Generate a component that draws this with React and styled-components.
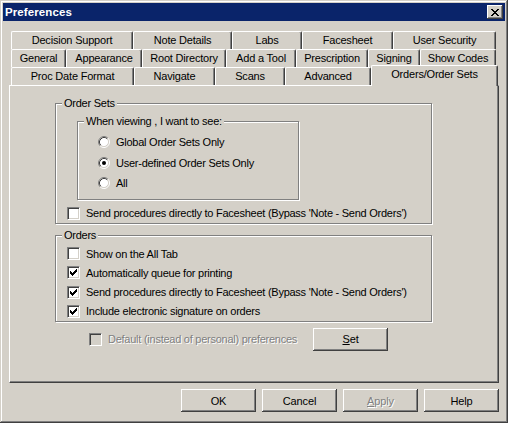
import React from "react";
import styled, { createGlobalStyle } from "styled-components";

const Global = createGlobalStyle`
  html, body { margin: 0; padding: 0; background: #d4d0c8; }
  body { font-family: "Liberation Sans", Arial, sans-serif; font-size: 11px; color: #000; letter-spacing: -0.25px; }
  * { box-sizing: border-box; }
`;

const Window = styled.div`
  width: 508px;
  height: 423px;
  background: #d4d0c8;
  padding: 3px;
  display: flex;
  flex-direction: column;
  box-shadow: inset -1px -1px 0 #404040, inset 1px 1px 0 #d4d0c8,
    inset -2px -2px 0 #808080, inset 2px 2px 0 #fff;
`;

const TitleBar = styled.div`
  height: 18px;
  background: #0a246a;
  display: flex;
  align-items: center;
  justify-content: space-between;
  padding: 0 2px 0 2px;
`;

const Title = styled.span`
  color: #fff;
  font-weight: bold;
  font-size: 11.5px;
  letter-spacing: 0.1px;
`;

const CloseBtn = styled.div`
  width: 16px;
  height: 14px;
  background: #d4d0c8;
  display: flex;
  align-items: center;
  justify-content: center;
  box-shadow: inset -1px -1px 0 #404040, inset 1px 1px 0 #fff,
    inset -2px -2px 0 #808080;
  padding-right: 1px;
`;

const Body = styled.div`
  flex: 1;
  display: flex;
  flex-direction: column;
  padding: 10px 3px 0 6px;
`;

const TabStrip = styled.div`
  display: flex;
  flex-direction: column;
  padding-left: 2px;
`;

const TabRow = styled.div`
  display: flex;
  height: 18px;
`;

const Tab = styled.div`
  position: relative;
  width: ${(p) => p.$w}px;
  height: ${(p) => (p.$sel ? 21 : 18)}px;
  margin-top: ${(p) => (p.$sel ? -2 : 0)}px;
  z-index: ${(p) => (p.$sel ? 2 : 0)};
  background: #d4d0c8;
  border-top: 1px solid #fff;
  border-left: 1px solid #fff;
  border-right: 1px solid #404040;
  border-radius: 2px 2px 0 0;
  box-shadow: inset -1px 0 0 #808080;
  display: flex;
  justify-content: center;
  align-items: flex-start;
  padding-top: 2px;
  white-space: nowrap;
  letter-spacing: -0.2px;
`;

const Panel = styled.div`
  width: 490px;
  height: 298px;
  border-top: 1px solid #fff;
  border-left: 1px solid #fff;
  border-right: 1px solid #404040;
  border-bottom: 1px solid #404040;
  box-shadow: inset -1px -1px 0 #808080;
  display: flex;
  flex-direction: column;
  padding: 17px 0 0 45px;
`;

const Group = styled.div`
  position: relative;
  width: ${(p) => p.$w}px;
  height: ${(p) => p.$h}px;
  margin-top: ${(p) => p.$mt || 0}px;
  margin-left: ${(p) => p.$ml || 0}px;
  border: 1px solid #808080;
  box-shadow: inset 1px 1px 0 #fff, 1px 1px 0 #fff;
  display: flex;
  flex-direction: column;
  padding: ${(p) => p.$pad};
`;

const Legend = styled.span`
  position: absolute;
  top: -7px;
  left: ${(p) => p.$left || 6}px;
  padding: 0 2px;
  background: #d4d0c8;
  line-height: 13px;
`;

const OptionRow = styled.label`
  display: flex;
  align-items: center;
  height: ${(p) => p.$h || 20}px;
  gap: ${(p) => p.$gap || 6}px;
  color: ${(p) => (p.$disabled ? "#808080" : "#000")};
  text-shadow: ${(p) => (p.$disabled ? "1px 1px 0 #fff" : "none")};
`;

const CheckBox = styled.span`
  width: 13px;
  height: 13px;
  flex: none;
  background: ${(p) => (p.$disabled ? "#d4d0c8" : "#fff")};
  border-top: 1px solid #808080;
  border-left: 1px solid #808080;
  border-right: 1px solid #fff;
  border-bottom: 1px solid #fff;
  box-shadow: inset 1px 1px 0 #404040, inset -1px -1px 0 #d4d0c8;
  display: flex;
  padding: 2px 0 0 2px;
`;

const BottomLine = styled.div`
  display: flex;
  align-items: center;
  margin-top: 5px;
  margin-left: 34px;
  height: 24px;
`;

const Button = styled.button`
  width: ${(p) => p.$w || 75}px;
  height: 23px;
  background: #d4d0c8;
  border: none;
  font-family: inherit;
  font-size: 11px;
  letter-spacing: -0.1px;
  color: ${(p) => (p.disabled ? "#808080" : "#000")};
  text-shadow: ${(p) => (p.disabled ? "1px 1px 0 #fff" : "none")};
  box-shadow: inset -1px -1px 0 #404040, inset 1px 1px 0 #fff,
    inset -2px -2px 0 #808080;
  padding: 0;
  margin-left: ${(p) => p.$ml || 0}px;
  u { text-decoration: underline; }
`;

const ButtonRow = styled.div`
  display: flex;
  justify-content: flex-end;
  gap: 6px;
  margin-top: 6px;
  width: 490px;
`;

function Check({ checked, disabled }) {
  return (
    <CheckBox $disabled={disabled}>
      {checked && (
        <svg width="7" height="7" viewBox="0 0 7 7" shapeRendering="crispEdges">
          {[2, 3, 4, 3, 2, 1, 0].map((y, x) => (
            <rect key={x} x={x} y={y} width="1" height="3" fill="#000" />
          ))}
        </svg>
      )}
    </CheckBox>
  );
}

function Radio({ checked }) {
  return (
    <svg width="12" height="12" viewBox="0 0 12 12" style={{ flex: "none" }}>
      <circle cx="6" cy="6" r="4.5" fill="#fff" />
      <path d="M2.11 9.89 A5.5 5.5 0 0 1 9.89 2.11" stroke="#808080" fill="none" />
      <path d="M9.89 2.11 A5.5 5.5 0 0 1 2.11 9.89" stroke="#fff" fill="none" />
      <path d="M2.82 9.18 A4.5 4.5 0 0 1 9.18 2.82" stroke="#404040" fill="none" />
      <path d="M9.18 2.82 A4.5 4.5 0 0 1 2.82 9.18" stroke="#d4d0c8" fill="none" />
      {checked && <circle cx="6" cy="6" r="2" fill="#000" />}
    </svg>
  );
}

const rows = [
  [
    ["Decision Support", 122],
    ["Note Details", 99],
    ["Labs", 70],
    ["Facesheet", 91],
    ["User Security", 103],
  ],
  [
    ["General", 55],
    ["Appearance", 76],
    ["Root Directory", 84],
    ["Add a Tool", 70],
    ["Prescription", 72],
    ["Signing", 52],
    ["Show Codes", 76],
  ],
  [
    ["Proc Date Format", 123],
    ["Navigate", 81],
    ["Scans", 70],
    ["Advanced", 86],
    ["Orders/Order Sets", 127, true],
  ],
];

const X_ROWS = [
  [0, 6],
  [1, 5],
  [2, 4],
  [3, 3],
  [2, 4],
  [1, 5],
  [0, 6],
];

export default function App() {
  return (
    <>
      <Global />
      <Window>
        <TitleBar>
          <Title>Preferences</Title>
          <CloseBtn>
            <svg width="8" height="7" viewBox="0 0 8 7" shapeRendering="crispEdges">
              {X_ROWS.map(([a, b], y) =>
                a === 3 ? (
                  <rect key={y} x="3" y={y} width="2" height="1" fill="#000" />
                ) : (
                  <g key={y}>
                    <rect x={a} y={y} width="2" height="1" fill="#000" />
                    <rect x={b} y={y} width="2" height="1" fill="#000" />
                  </g>
                )
              )}
            </svg>
          </CloseBtn>
        </TitleBar>
        <Body>
          <TabStrip>
            {rows.map((r, i) => (
              <TabRow key={i}>
                {r.map(([label, w, sel]) => (
                  <Tab key={label} $w={w} $sel={sel}>
                    {label}
                  </Tab>
                ))}
              </TabRow>
            ))}
          </TabStrip>
          <Panel>
            <Group $w={377} $h={121} $pad="17px 0 0 11px">
              <Legend>Order Sets</Legend>
              <Group $w={222} $h={80} $ml={10} $pad="10px 0 0 20px">
                <Legend>When viewing , I want to see:</Legend>
                <OptionRow $h={20.5}>
                  <Radio />
                  Global Order Sets Only
                </OptionRow>
                <OptionRow $h={20.5}>
                  <Radio checked />
                  User-defined Order Sets Only
                </OptionRow>
                <OptionRow $h={20.5}>
                  <Radio />
                  All
                </OptionRow>
              </Group>
              <OptionRow $h={20} style={{ marginTop: 3 }}>
                <Check />
                Send procedures directly to Facesheet (Bypass 'Note - Send Orders')
              </OptionRow>
            </Group>
            <Group $w={377} $h={87} $mt={11} $pad="8px 0 0 11px">
              <Legend>Orders</Legend>
              <OptionRow $h={19.5}>
                <Check />
                Show on the All Tab
              </OptionRow>
              <OptionRow $h={19.5}>
                <Check checked />
                Automatically queue for printing
              </OptionRow>
              <OptionRow $h={19.5}>
                <Check checked />
                Send procedures directly to Facesheet (Bypass 'Note - Send Orders')
              </OptionRow>
              <OptionRow $h={19.5}>
                <Check checked />
                Include electronic signature on orders
              </OptionRow>
            </Group>
            <BottomLine>
              <OptionRow $disabled $h={24}>
                <Check disabled />
                Default (instead of personal) preferences
              </OptionRow>
              <Button $ml={16}>
                <u>S</u>et
              </Button>
            </BottomLine>
          </Panel>
          <ButtonRow>
            <Button>OK</Button>
            <Button>Cancel</Button>
            <Button disabled>
              <u>A</u>pply
            </Button>
            <Button>Help</Button>
          </ButtonRow>
        </Body>
      </Window>
    </>
  );
}
